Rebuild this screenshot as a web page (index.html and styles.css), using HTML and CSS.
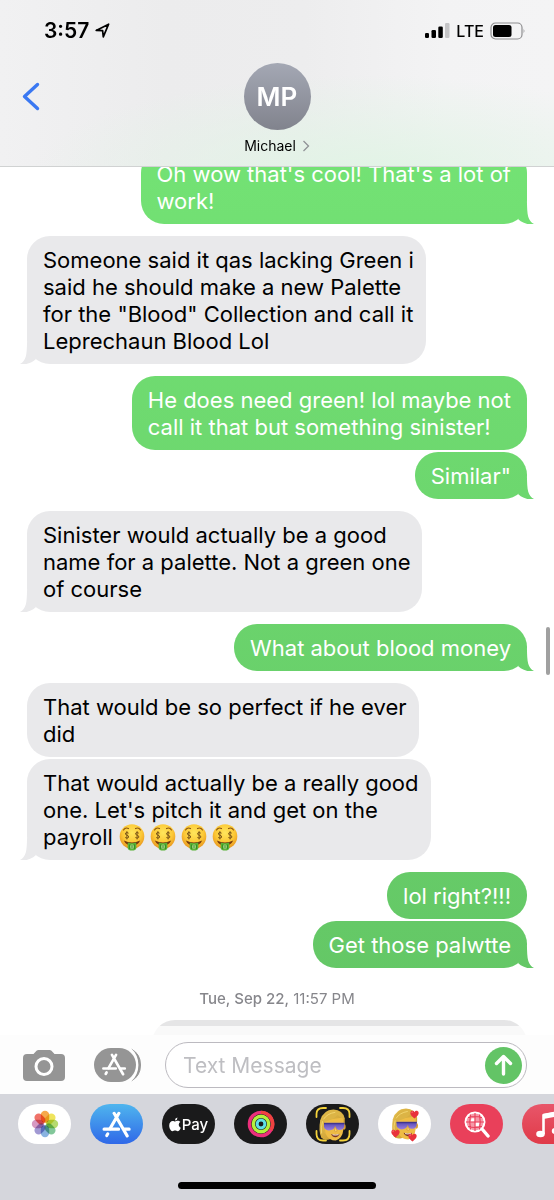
FILE: index.html
```
<!DOCTYPE html>
<html lang="en">
<head>
    <meta charset="UTF-8">
    <meta name="viewport" content="width=device-width, initial-scale=1.0">
    <title>Messages</title>
    <link rel="stylesheet" href="styles.css">
</head>
<body>
    <!-- shared shapes -->
    <svg class="sprite" aria-hidden="true">
        <defs>
            <radialGradient id="faceFill" cx="50%" cy="35%" r="65%">
                <stop offset="0" stop-color="#ffe65c"/>
                <stop offset="0.6" stop-color="#fcc836"/>
                <stop offset="1" stop-color="#e8951f"/>
            </radialGradient>
            <linearGradient id="hairFill" x1="0" y1="0" x2="1" y2="1">
                <stop offset="0" stop-color="#e6c251"/>
                <stop offset="1" stop-color="#c6952c"/>
            </linearGradient>
            <linearGradient id="visorFill" x1="0" y1="0" x2="0" y2="1">
                <stop offset="0" stop-color="#5145b0"/>
                <stop offset="1" stop-color="#9c7fe0"/>
            </linearGradient>
        </defs>
        <symbol id="money" viewBox="0 0 26 27">
            <circle cx="13" cy="12.5" r="12.3" fill="url(#faceFill)"/>
            <path d="M4.5 6Q6.5 3 9.5 4.6M16.5 4.6Q19.5 3 21.5 6" fill="none" stroke="#8a5413" stroke-width="1.1" stroke-linecap="round"/>
            <path d="M9.6 9.2Q7.8 7.8 6.6 9Q5.8 10.6 7.9 11.2Q10.3 11.8 9.5 13.5Q8.1 14.8 6.2 13.5M7.9 7.2V15.4" fill="none" stroke="#7b5417" stroke-width="1"/>
            <path d="M19.8 9.2Q18 7.8 16.8 9Q16 10.6 18.1 11.2Q20.5 11.8 19.7 13.5Q18.3 14.8 16.4 13.5M18.1 7.2V15.4" fill="none" stroke="#7b5417" stroke-width="1"/>
            <path d="M4.8 16.4Q13 20.6 21.2 16.4Q19 21.5 13 21.5Q7 21.5 4.8 16.4Z" fill="#74380f"/>
            <path d="M8.8 18.5Q13 20 17.2 18.5L17.4 24Q16.8 26.6 13 26.6Q9.2 26.6 8.6 24Z" fill="#58b236"/>
            <path d="M10.5 20.5V25M15.5 20.5V25" stroke="#2f8423" stroke-width="0.8"/>
            <ellipse cx="13" cy="22.8" rx="1.7" ry="2.4" fill="#b7e596"/>
            <path d="M13 21V24.7" stroke="#28751d" stroke-width="0.9"/>
        </symbol>
        <symbol id="appstore" viewBox="0 0 28 26">
            <g fill="none" stroke="#fff" stroke-width="3" stroke-linecap="round">
                <path d="M16.3 2.2L7.8 17M11.7 2.2L24.3 24"/>
                <path d="M2 17.5H16M21.8 17.5H26.2M5.6 22L4.6 23.7"/>
            </g>
        </symbol>
        <symbol id="heart" viewBox="0 0 10 10">
            <path d="M5 9.5C1 6.5 0 4.5 .5 2.6C1.2 .4 4 .3 5 2.5C6 .3 8.8 .4 9.5 2.6C10 4.5 9 6.5 5 9.5Z" fill="#e8323c"/>
            <path d="M2 3Q2.3 2 3.2 2" stroke="#ff9a96" stroke-width=".8" fill="none"/>
        </symbol>
        <symbol id="memoji" viewBox="0 0 30 36">
            <path d="M3 31Q0 24 2 13Q5 2 16 1.5Q26 2 28 11Q28.5 16 27 19L12 33Q6 35 3 31Z" fill="url(#hairFill)"/>
            <ellipse cx="27.3" cy="20" rx="1.7" ry="3" fill="#dda02e"/>
            <path d="M6 13L26.5 10L26.5 23Q25.5 32 18.5 34.5Q11 34.5 7.5 27Z" fill="#eebc45"/>
            <path d="M4 15Q4 4 16 2Q26 3 27.5 12Q24 11 20.5 7.5Q16 12.5 7 14.5Q5.5 20 7.5 28Q4 24 4 15Z" fill="#dcb445"/>
            <path d="M5.5 12Q9 6 18 4.5M3.5 27Q2.5 20 4.5 14" fill="none" stroke="#f2d671" stroke-width="1"/>
            <path d="M6 15.5H27.5V19.5Q26.5 23.5 21.5 23.2Q18.5 23 17.5 20.5Q16 23.5 11.5 23.8Q7 23.5 6 20Z" fill="url(#visorFill)"/>
            <path d="M6 16.5H27.5" stroke="#40358f" stroke-width="1.2"/>
            <path d="M17.8 19.5L17 24.5Q18.5 25.8 20 24.3Z" fill="#f6cf68" stroke="#cf9530" stroke-width=".6"/>
            <path d="M13.5 27.5Q18 29 22.5 27.3Q21.5 31 18 31Q15 31 13.5 27.5Z" fill="#7b3520"/>
            <path d="M15 28.3Q18 29.2 21.5 28.2" stroke="#fff" stroke-width=".9" fill="none"/>
        </symbol>
    </svg>

    <div class="phone">
        <header class="header">
            <div class="status">
                <div class="clock">
                    <span>3:57</span>
                    <svg width="15" height="15" viewBox="0 0 15 15"><path d="M1.2 7.4L13.6 1.2L8.3 13.8L7.6 7.7Z" fill="none" stroke="#000" stroke-width="1.7" stroke-linejoin="round"/></svg>
                </div>
                <div class="signals">
                    <svg width="26" height="17" viewBox="0 0 26 17">
                        <rect x="1" y="11" width="4" height="5" rx="1.3"/>
                        <rect x="7.5" y="8" width="4.5" height="8" rx="1.3"/>
                        <rect x="14.3" y="4.5" width="4.5" height="11.5" rx="1.3"/>
                        <rect x="21" y="1" width="4.5" height="15" rx="1.3" fill="#c4c4c6"/>
                    </svg>
                    <span class="carrier">LTE</span>
                    <svg width="36" height="18" viewBox="0 0 36 18">
                        <rect x="1" y="1" width="31" height="16" rx="4.5" fill="none" stroke="#8e8e90" stroke-width="1.2"/>
                        <rect x="3" y="3" width="18.5" height="12" rx="2.5"/>
                        <path d="M33.6 6.5Q35.4 9 33.6 11.5Z" fill="#8e8e90"/>
                    </svg>
                </div>
            </div>
            <div class="nav">
                <button type="button" class="back" aria-label="Back">
                    <svg width="18" height="29" viewBox="0 0 18 29"><path d="M15.5 2.5L2.5 14.5L15.5 26.5" fill="none" stroke="#3a78f2" stroke-width="3.4" stroke-linecap="round" stroke-linejoin="round"/></svg>
                </button>
                <a href="#" class="contact">
                    <span class="avatar">MP</span>
                    <span class="name">Michael
                        <svg width="8" height="12" viewBox="0 0 8 12"><path d="M1.5 1L6.5 6L1.5 11" fill="none" stroke="#909296" stroke-width="1.3"/></svg>
                    </span>
                </a>
            </div>
        </header>

        <main class="thread">
            <div class="messages">
                <div class="bubble sent tail">Oh wow that's cool! That's a lot of<br>work!</div>
                <div class="bubble received tail">Someone said it qas lacking Green i<br>said he should make a new Palette<br>for the "Blood" Collection and call it<br>Leprechaun Blood Lol</div>
                <div class="bubble sent">He does need green! lol maybe not<br>call it that but something sinister!</div>
                <div class="bubble sent tail follow">Similar"</div>
                <div class="bubble received tail">Sinister would actually be a good<br>name for a palette. Not a green one<br>of course</div>
                <div class="bubble sent tail">What about blood money</div>
                <div class="bubble received">That would be so perfect if he ever<br>did</div>
                <div class="bubble received tail follow">That would actually be a really good<br>one. Let's pitch it and get on the<br>payroll <span class="emojis" role="img" aria-label="money-mouth faces"><svg><use href="#money"/></svg><svg><use href="#money"/></svg><svg><use href="#money"/></svg><svg><use href="#money"/></svg></span></div>
                <div class="bubble sent">lol right?!!!</div>
                <div class="bubble sent tail follow">Get those palwtte</div>
                <div class="date"><b>Tue, Sep 22,</b> 11:57 PM</div>
                <div class="bubble next"></div>
            </div>
            <div class="scrollbar"></div>
        </main>

        <footer>
            <form class="composer">
                <button type="button" class="camera" aria-label="Camera">
                    <svg width="42" height="33" viewBox="0 0 42 33">
                        <path d="M4 5H10.5L13.5 1.8Q14.3 1 15.5 1H26.5Q27.7 1 28.5 1.8L31.5 5H38Q42 5 42 9V28Q42 32 38 32H4Q0 32 0 28V9Q0 5 4 5Z" fill="#959595"/>
                        <circle cx="21" cy="17.5" r="8" fill="none" stroke="#fff" stroke-width="3"/>
                    </svg>
                </button>
                <button type="button" class="apps" aria-label="Apps">
                    <svg width="48" height="34" viewBox="0 0 48 34">
                        <rect width="42" height="34" rx="17" fill="#959595"/>
                        <path d="M37.5 1.2Q46.5 6 46.5 17Q46.5 28 37.5 32.8Q44 26 44 17Q44 8 37.5 1.2Z" fill="#959595" stroke="#959595"/>
                        <path d="M36 .5Q43.5 7 43.5 17Q43.5 27 36 33.5" fill="none" stroke="#fff" stroke-width="1.8"/>
                        <use href="#appstore" x="7" y="5" width="26" height="23"/>
                    </svg>
                </button>
                <div class="field">
                    <input type="text" placeholder="Text Message" aria-label="Text Message">
                    <button type="button" class="send" aria-label="Send">
                        <svg width="19" height="22" viewBox="0 0 19 22"><path d="M9.5 20V3M2.5 9.5L9.5 2.5L16.5 9.5" fill="none" stroke="#fff" stroke-width="3.4" stroke-linecap="round" stroke-linejoin="round"/></svg>
                    </button>
                </div>
            </form>

            <div class="tray">
                <div class="dock">
                    <button type="button" class="app" aria-label="Photos">
                        <svg width="28" height="28" viewBox="-14 -14 28 28">
                            <g class="petals">
                                <rect x="-4.2" y="-13.2" width="8.4" height="12" rx="4.2" fill="#f59a2c"/>
                                <rect x="-4.2" y="-13.2" width="8.4" height="12" rx="4.2" fill="#ece040" transform="rotate(45)"/>
                                <rect x="-4.2" y="-13.2" width="8.4" height="12" rx="4.2" fill="#a9d456" transform="rotate(90)"/>
                                <rect x="-4.2" y="-13.2" width="8.4" height="12" rx="4.2" fill="#6cbd88" transform="rotate(135)"/>
                                <rect x="-4.2" y="-13.2" width="8.4" height="12" rx="4.2" fill="#74a6dc" transform="rotate(180)"/>
                                <rect x="-4.2" y="-13.2" width="8.4" height="12" rx="4.2" fill="#9187cc" transform="rotate(225)"/>
                                <rect x="-4.2" y="-13.2" width="8.4" height="12" rx="4.2" fill="#cf87b8" transform="rotate(270)"/>
                                <rect x="-4.2" y="-13.2" width="8.4" height="12" rx="4.2" fill="#ee5a4e" transform="rotate(315)"/>
                            </g>
                        </svg>
                    </button>
                    <button type="button" class="app store" aria-label="App Store">
                        <svg width="29" height="27"><use href="#appstore"/></svg>
                    </button>
                    <button type="button" class="app dark pay" aria-label="Apple Pay">
                        <svg width="12" height="15" viewBox="0 0 12 15">
                            <path d="M8.5 .4Q8.6 2.9 5.9 3.5Q5.9 1 8.5 .4Z" fill="#fff"/>
                            <path d="M6 4.5C7 4.5 7.5 3.8 8.8 3.8C10 3.8 10.9 4.4 11.4 5.1C9 6.5 9.4 9.8 11.8 10.7C11 12.7 9.9 14.2 8.7 14.2C7.6 14.2 7.3 13.6 6.1 13.6C4.9 13.6 4.5 14.2 3.5 14.2C1.7 14.2 .2 11 .2 8.5C.2 5.5 2 3.9 3.7 3.9C4.8 3.9 5.3 4.5 6 4.5Z" fill="#fff"/>
                        </svg>
                        <span>Pay</span>
                    </button>
                    <button type="button" class="app dark" aria-label="Fitness">
                        <svg width="28" height="28" viewBox="0 0 28 28" fill="none" stroke-width="3.4">
                            <circle cx="14" cy="14" r="11.6" stroke="#ec2f7b"/>
                            <path d="M14 2.4A11.6 11.6 0 0 1 24 20" stroke="#f0433f"/>
                            <circle cx="14" cy="14" r="7.7" stroke="#b4f03c"/>
                            <circle cx="14" cy="14" r="3.9" stroke="#5fdfe6" stroke-width="3"/>
                        </svg>
                    </button>
                    <button type="button" class="app dark" aria-label="Memoji">
                        <svg width="36" height="38" viewBox="0 0 36 38">
                            <use href="#memoji" x="3" y="3" width="29" height="34"/>
                            <path d="M1.5 12V9Q1.5 3 8 3H11M25 3H28Q34.5 3 34.5 9V12M34.5 26V29Q34.5 35.5 28 35.5H25M11 35.5H8Q1.5 35.5 1.5 29V26" fill="none" stroke="#f5d33b" stroke-width="1.8" stroke-linecap="round"/>
                        </svg>
                    </button>
                    <button type="button" class="app" aria-label="Memoji Stickers">
                        <svg width="30" height="36" viewBox="0 0 30 36">
                            <use href="#memoji" x="1" y="1" width="28" height="34"/>
                            <use href="#heart" x="20" y="4" width="9" height="9"/>
                            <use href="#heart" x="1" y="23" width="9" height="9"/>
                            <use href="#heart" x="18" y="27" width="9" height="9"/>
                        </svg>
                    </button>
                    <button type="button" class="app images" aria-label="Images">
                        <svg width="26" height="27" viewBox="0 0 26 27" fill="none" stroke="#fff">
                            <circle cx="11" cy="11" r="9.5" fill="#f69aa9" stroke-width="2"/>
                            <path d="M11 2V20M2 11H20M4 6.5Q11 4.5 18 6.5M4 15.5Q11 17.5 18 15.5M6.5 3.5Q5 11 6.5 18.5M15.5 3.5Q17 11 15.5 18.5" stroke="#e9405a" stroke-width="1.1"/>
                            <path d="M7.5 7.3H10.2V10.2H6.7ZM11.8 11.8H15.3L14.8 15H11.8Z" fill="#fff" stroke="none"/>
                            <path d="M18.5 18.5L24 25" stroke-width="3.4" stroke-linecap="round"/>
                        </svg>
                    </button>
                    <button type="button" class="app music" aria-label="Music">
                        <svg width="27" height="29" viewBox="0 0 27 29">
                            <path d="M8.5 24V5L24 2V21" fill="none" stroke="#fff" stroke-width="2.6" stroke-linejoin="round"/>
                            <path d="M8.5 4L24 1V6L8.5 9Z" fill="#fff"/>
                            <ellipse cx="5.5" cy="24" rx="4.3" ry="3.3" fill="#fff"/>
                            <ellipse cx="21" cy="21" rx="4.3" ry="3.3" fill="#fff"/>
                        </svg>
                    </button>
                </div>
                <div class="home"></div>
            </div>
        </footer>
    </div>
</body>
</html>
```
FILE: styles.css
```
* {
    box-sizing: border-box;
    margin: 0;
    padding: 0;
    font-family: Inter, 'Liberation Sans', sans-serif;
}
body {
    background: #fff;
    color: #000;
}
button {
    border: none;
    background: none;
    cursor: pointer;
}
svg {
    display: block;
    flex: none;
}
.sprite {
    position: absolute;
    width: 0;
    height: 0;
}
.phone {
    display: flex;
    flex-direction: column;
    height: 100vh;
    overflow: hidden;
}

/* header */
.header {
    background:
        radial-gradient(ellipse 60% 60% at 66% 105%, #e1f4e5, rgba(225, 244, 229, 0)),
        linear-gradient(90deg, #f1f1f2, #ececed 30%, #ededee 55%, #f3f3f4 80%, #f4f4f5);
    border-bottom: 1px solid #d0d2d2;
    flex: none;
}
.status {
    display: flex;
    justify-content: space-between;
    align-items: center;
    height: 61px;
    padding: 0 28px 0 44px;
}
.clock, .signals {
    display: flex;
    align-items: center;
    gap: 6px;
}
.clock {
    font-size: 21px;
    font-weight: 600;
}
.carrier {
    font-size: 16px;
    font-weight: 500;
}
.nav {
    display: grid;
    grid-template-columns: 1fr auto 1fr;
    align-items: start;
    padding: 2px 22px 10px;
}
.back {
    justify-self: start;
    margin-top: 19px;
}
.contact {
    display: flex;
    flex-direction: column;
    align-items: center;
    gap: 6px;
    color: #000;
    text-decoration: none;
}
.avatar {
    width: 67px;
    height: 67px;
    border-radius: 50%;
    background: linear-gradient(#a4a8b4, #81838d);
    color: #fff;
    font-size: 26px;
    font-weight: 600;
    line-height: 67px;
    text-align: center;
}
.name {
    display: flex;
    align-items: center;
    gap: 6px;
    font-size: 14px;
    line-height: 20px;
}

/* conversation */
.thread {
    position: relative;
    flex: 1;
    min-height: 0;
    overflow: hidden;
}
.thread::after {
    content: "";
    position: absolute;
    left: 0;
    right: 0;
    bottom: 0;
    height: 9px;
    background: rgba(255, 255, 255, 0.75);
}
.messages {
    display: flex;
    flex-direction: column;
    align-items: flex-start;
    margin-top: -29px;
    padding: 0 27px;
}
.bubble {
    position: relative;
    margin-top: 12px;
    padding: 11px 16px 9px;
    border-radius: 23px;
    font-size: 22px;
    line-height: 27px;
    white-space: nowrap;
}
.bubble.follow {
    margin-top: 2px;
}
.received {
    padding-right: 12px;
    background: #e9e9eb;
}
.sent {
    align-self: flex-end;
    background: linear-gradient(#76e777, #60c062) fixed;
    color: #fff;
}
.tail::after {
    content: "";
    position: absolute;
    bottom: 0;
    width: 30px;
    height: 23px;
    background: inherit;
    clip-path: path("M23 0C23 14 24 20 30 23C24 24 18 22 14 18Z");
}
.sent.tail::after {
    right: -7px;
}
.received.tail::after {
    left: -7px;
    transform: scaleX(-1);
}
.emojis {
    display: inline-flex;
    gap: 5px;
    height: 27px;
    vertical-align: top;
}
.emojis svg {
    width: 26px;
    height: 27px;
}
.date {
    align-self: center;
    margin: 21px 0 11px;
    color: #86868b;
    font-size: 15px;
    line-height: 20px;
}
.date b {
    font-weight: 500;
}
.next {
    align-self: flex-end;
    width: 75%;
    height: 74px;
    margin-top: 0;
    background: #e5e5e6;
}
.scrollbar {
    position: absolute;
    top: 53%;
    right: 4px;
    width: 4px;
    height: 48px;
    border-radius: 2px;
    background: #a0a0a0;
}

/* message box */
.composer {
    display: flex;
    align-items: center;
    padding: 7px 27px 6px 23px;
    background: #fdfdfd;
}
.apps {
    margin: 0 23px 0 29px;
}
.field {
    display: flex;
    align-items: center;
    flex: 1;
    min-width: 0;
    height: 46px;
    padding: 0 4px 0 17px;
    border: 1px solid #bcbac0;
    border-radius: 23px;
    background: #fff;
}
.field input {
    flex: 1;
    min-width: 0;
    border: none;
    outline: none;
    background: none;
    font-size: 21px;
}
.field input::placeholder {
    color: #bebec2;
}
.send {
    display: flex;
    align-items: center;
    justify-content: center;
    width: 37px;
    height: 37px;
    border-radius: 50%;
    background: #63c466;
}

/* app tray */
.tray {
    padding: 10px 0 11px;
    background: #d5d6dc;
}
.dock {
    display: flex;
    gap: 19px;
    padding-left: 18px;
    overflow: hidden;
}
.app {
    display: flex;
    align-items: center;
    justify-content: center;
    flex: none;
    width: 53px;
    height: 40px;
    border-radius: 20px;
    background: #fff;
    overflow: hidden;
}
.petals rect {
    mix-blend-mode: multiply;
    opacity: 0.85;
}
.store {
    background: linear-gradient(#4fb5ee, #2f68e8);
}
.dark {
    background: #1a1a1b;
}
.pay {
    gap: 1px;
    color: #fff;
    font-size: 15px;
    font-weight: 500;
}
.images {
    background: #e9405a;
}
.music {
    background: linear-gradient(#e8566a, #e03a48);
}
.home {
    width: 198px;
    height: 7px;
    margin: 38px auto 0;
    border-radius: 4px;
    background: #000;
}
```
